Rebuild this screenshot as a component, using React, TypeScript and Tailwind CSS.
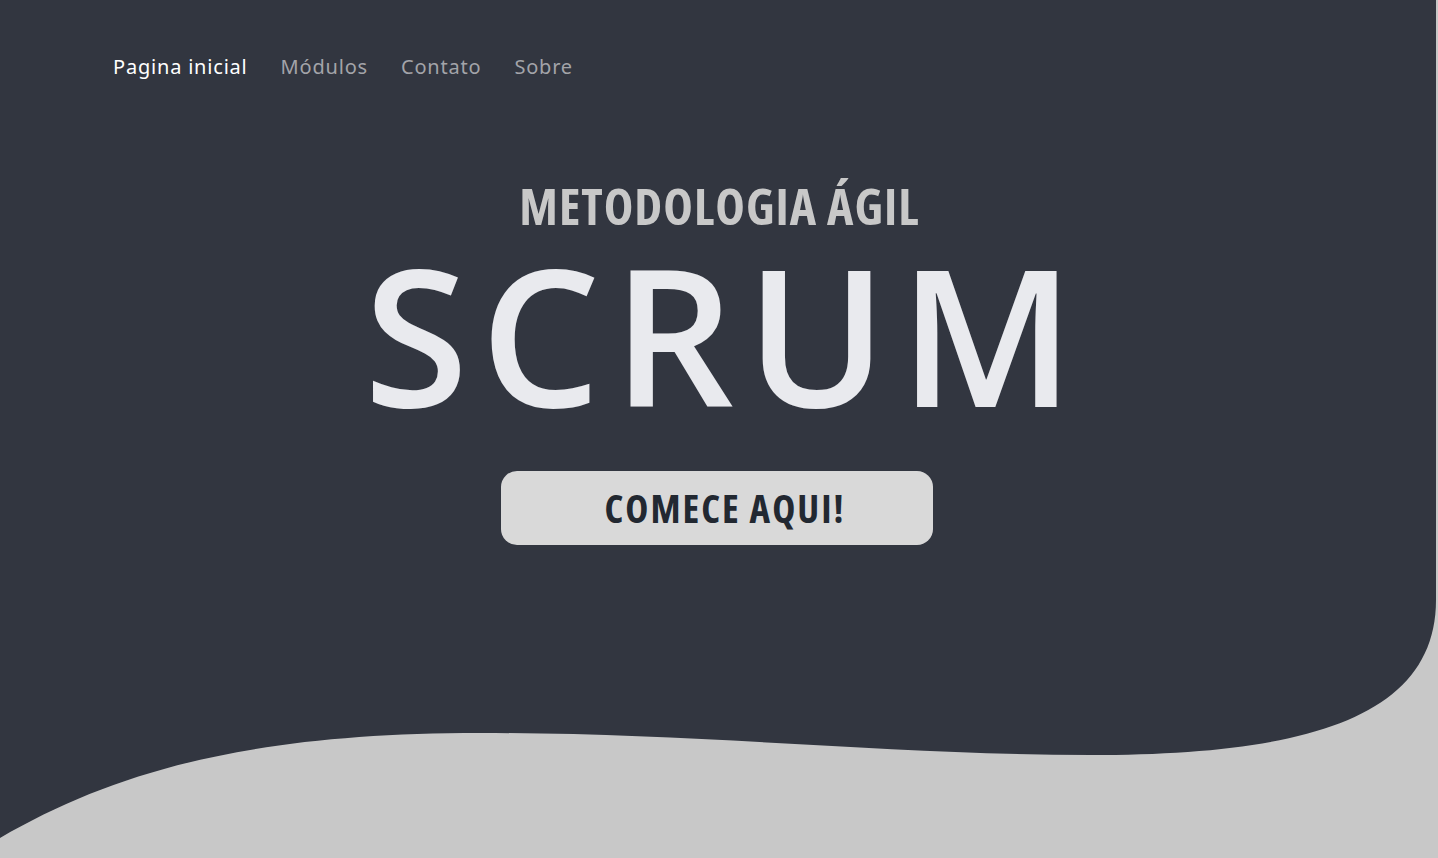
const navItems = ["Pagina inicial", "Módulos", "Contato", "Sobre"];

function Wave() {
  return (
    <svg
      className="absolute inset-0 h-full w-full"
      viewBox="0 0 1438 858"
      preserveAspectRatio="none"
    >
      <path
        d="M0,838 C120,768 260,733 480,733 C700,733 900,755 1090,755 C1300,755 1436,720 1436,600 L1436,0 L1438,0 L1438,858 L0,858 Z"
        fill="#c8c8c8"
      />
    </svg>
  );
}

export default function App() {
  return (
    <div className="relative h-[858px] w-full overflow-hidden bg-[#323640]">
      <Wave />
      <div className="relative flex flex-col">
        <nav
          className="flex gap-[33px] px-[113px] pt-[53px] text-[20px] leading-7 tracking-[0.8px]"
          style={{ fontFamily: '"Noto Sans", sans-serif' }}
        >
          {navItems.map((item, i) => (
            <a
              key={item}
              href="#"
              className={i === 0 ? "text-white" : "text-[#a3a4a9]"}
            >
              {item}
            </a>
          ))}
        </nav>

        <main
          className="flex flex-col items-center pt-[100px]"
          style={{ fontFamily: '"Open Sans", sans-serif' }}
        >
          <h2 className="font-stretch-condensed pl-[1px] text-[50px] font-bold leading-none tracking-[1px] text-[#c8c8c8]">
            METODOLOGIA ÁGIL
          </h2>
          <h1 className="mt-[8px] pl-[12px] text-[190px] font-semibold leading-none tracking-[12px] text-[#e9eaee]">
            SCRUM
          </h1>
          <button className="mt-[42px] mr-[4px] flex h-[74px] w-[432px] items-center justify-center rounded-2xl bg-[#d9d9d9] pl-4 text-[39px] font-bold tracking-[2px] text-[#222831] font-stretch-condensed">
            COMECE AQUI!
          </button>
        </main>
      </div>
    </div>
  );
}
